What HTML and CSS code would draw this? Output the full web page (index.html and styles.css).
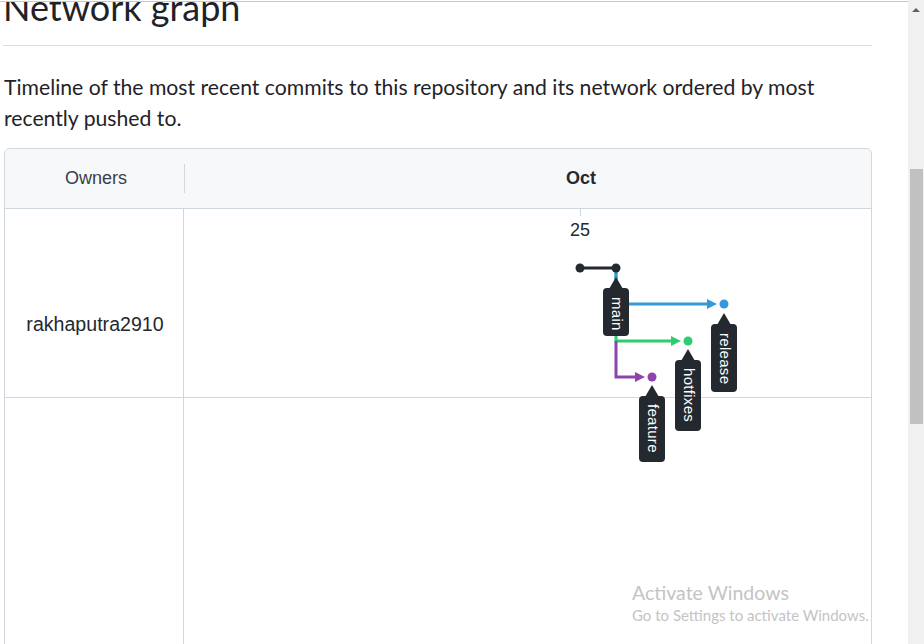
FILE: index.html
```html
<!DOCTYPE html>
<html lang="en">
<head>
<meta charset="utf-8">
<title>Network graph</title>
<link rel="stylesheet" href="styles.css">
</head>
<body>
<div class="window">
  <div class="main">
    <div class="topline"></div>
    <div class="viewport">
      <div class="page">
        <h2 class="title">Network graph</h2>
        <p class="lead">Timeline of the most recent commits to this repository and its network ordered by most recently pushed to.</p>
        <div class="network">
          <div class="net-head">
            <div class="head-owner">Owners</div>
            <div class="head-sep"></div>
            <div class="head-month">Oct</div>
          </div>
          <div class="net-body">
            <div class="net-row">
              <div class="owner-cell">rakhaputra2910</div>
              <div class="graph-cell"></div>
            </div>
            <div class="net-row net-row-empty">
              <div class="owner-cell"></div>
              <div class="graph-cell"></div>
            </div>
            <svg class="graph" viewBox="185 209 686 435" width="686" height="435" xmlns="http://www.w3.org/2000/svg">
              <line x1="580.5" y1="209" x2="580.5" y2="216" stroke="#d0d7de" stroke-width="1"/>
              <text class="day" x="580" y="236">25</text>

              <path d="M616 268 V341 H673" stroke="#2ecc71" stroke-width="3" fill="none"/>
              <polygon points="671,336 681,341 671,346" fill="#2ecc71"/>
              <circle cx="688" cy="341" r="4.5" fill="#2ecc71"/>

              <path d="M616 268 V304 H709" stroke="#3498db" stroke-width="3" fill="none"/>
              <polygon points="707,299 717,304 707,309" fill="#3498db"/>
              <circle cx="724" cy="304" r="4.5" fill="#3498db"/>

              <path d="M616 341 V377 H637" stroke="#8e44ad" stroke-width="3" fill="none"/>
              <polygon points="635,372 645,377 635,382" fill="#8e44ad"/>
              <circle cx="652" cy="377" r="4.5" fill="#8e44ad"/>

              <line x1="580" y1="268" x2="616" y2="268" stroke="#24292f" stroke-width="3"/>
              <circle cx="580" cy="268" r="4.5" fill="#24292f"/>
              <circle cx="616" cy="268" r="4.5" fill="#24292f"/>

              <g class="label">
                <polygon points="616,277 609,289 623,289"/>
                <rect x="603" y="288" width="26" height="48" rx="4"/>
                <text transform="translate(616 297) rotate(90)">main</text>
              </g>
              <g class="label">
                <polygon points="724,313 717,325 731,325"/>
                <rect x="711" y="324" width="26" height="68" rx="4"/>
                <text transform="translate(724 333) rotate(90)">release</text>
              </g>
              <g class="label">
                <polygon points="688,349 681,361 695,361"/>
                <rect x="675" y="360" width="26" height="71" rx="4"/>
                <text transform="translate(688 368) rotate(90)">hotfixes</text>
              </g>
              <g class="label">
                <polygon points="652,385 645,397 659,397"/>
                <rect x="639" y="396" width="26" height="66" rx="4"/>
                <text transform="translate(652 404) rotate(90)">feature</text>
              </g>
            </svg>
          </div>
        </div>
      </div>
      <div class="activate">
        <div class="activate-title">Activate Windows</div>
        <div class="activate-sub">Go to Settings to activate Windows.</div>
      </div>
    </div>
  </div>
  <div class="scrollbar">
    <div class="scroll-up"><span class="arrow-up"></span></div>
    <div class="scroll-thumb"></div>
  </div>
</div>
</body>
</html>
```
FILE: styles.css
```css
html, body {
  margin: 0;
  padding: 0;
  background: #ffffff;
}

body {
  width: 924px;
  height: 644px;
  overflow: hidden;
}

.window {
  display: flex;
  width: 924px;
  height: 644px;
}

.main {
  width: 908px;
  height: 644px;
  display: flex;
  flex-direction: column;
}

.topline {
  height: 1px;
  margin-top: 1px;
  background: #c8c8c8;
  flex: none;
}

.viewport {
  position: relative;
  flex: 1;
  overflow: hidden;
}

.page {
  width: 869px;
  margin-left: 3px;
}

.title {
  margin: -17px 0 0 0;
  padding: 0 0 16px 0;
  font-family: "Lato", "Open Sans", sans-serif;
  font-weight: 400;
  font-size: 36px;
  line-height: 44px;
  color: #1f2328;
  border-bottom: 1px solid #d8dee4;
}

.lead {
  margin: 26px 0 14px 1px;
  font-family: "Lato", "Open Sans", sans-serif;
  font-size: 21.2px;
  line-height: 31px;
  color: #1f2328;
}

.network {
  margin-left: 1px;
  width: 868px;
  box-sizing: border-box;
  border: 1px solid #d0d7de;
  border-radius: 6px;
  font-family: "Liberation Sans", Arial, sans-serif;
  color: #24292f;
}

.net-head {
  display: flex;
  align-items: center;
  height: 59px;
  background: #f6f8fa;
  border-bottom: 1px solid #d0d7de;
  border-radius: 6px 6px 0 0;
}

.head-owner {
  width: 179px;
  padding-left: 3px;
  box-sizing: border-box;
  text-align: center;
  font-size: 18px;
  color: #3a3f45;
}

.head-sep {
  width: 1px;
  height: 29px;
  background: #d0d7de;
}

.head-month {
  flex: 1;
  padding-left: 381px;
  font-size: 18px;
  font-weight: 700;
  color: #24292f;
}

.net-body {
  position: relative;
}

.net-row {
  display: flex;
  height: 188px;
  border-bottom: 1px solid #d0d7de;
}

.net-row-empty {
  height: 300px;
  border-bottom: none;
}

.owner-cell {
  width: 179px;
  border-right: 1px solid #d0d7de;
  padding-top: 104px;
  padding-left: 2px;
  box-sizing: border-box;
  text-align: center;
  font-size: 19.6px;
  line-height: 22px;
  color: #24292f;
}

.graph-cell {
  flex: 1;
}

.graph {
  position: absolute;
  left: 180px;
  top: 0;
  overflow: visible;
}

.graph .day {
  font-family: "Liberation Sans", Arial, sans-serif;
  font-size: 18px;
  fill: #24292f;
  text-anchor: middle;
}

.graph .label polygon,
.graph .label rect {
  fill: #24292f;
}

.graph .label text {
  font-family: "Liberation Sans", Arial, sans-serif;
  font-size: 15px;
  letter-spacing: 0.3px;
  fill: #ffffff;
  dominant-baseline: middle;
}

.activate {
  position: absolute;
  left: 632px;
  top: 579px;
  font-family: "Lato", "Open Sans", sans-serif;
  color: #c4c4c4;
}

.activate-title {
  font-size: 19.5px;
  line-height: 24px;
}

.activate-sub {
  font-size: 15px;
  line-height: 20px;
}

.scrollbar {
  width: 16px;
  height: 644px;
  background: #f0f0f0;
  display: flex;
  flex-direction: column;
}

.scroll-up {
  height: 17px;
  display: flex;
  align-items: center;
  justify-content: center;
}

.arrow-up {
  width: 0;
  height: 0;
  border-left: 4px solid transparent;
  border-right: 4px solid transparent;
  border-bottom: 4px solid #606060;
  margin-top: 3px;
}

.scroll-thumb {
  margin: 152px 1px 0 2px;
  height: 255px;
  background: #c1c1c1;
}
```
